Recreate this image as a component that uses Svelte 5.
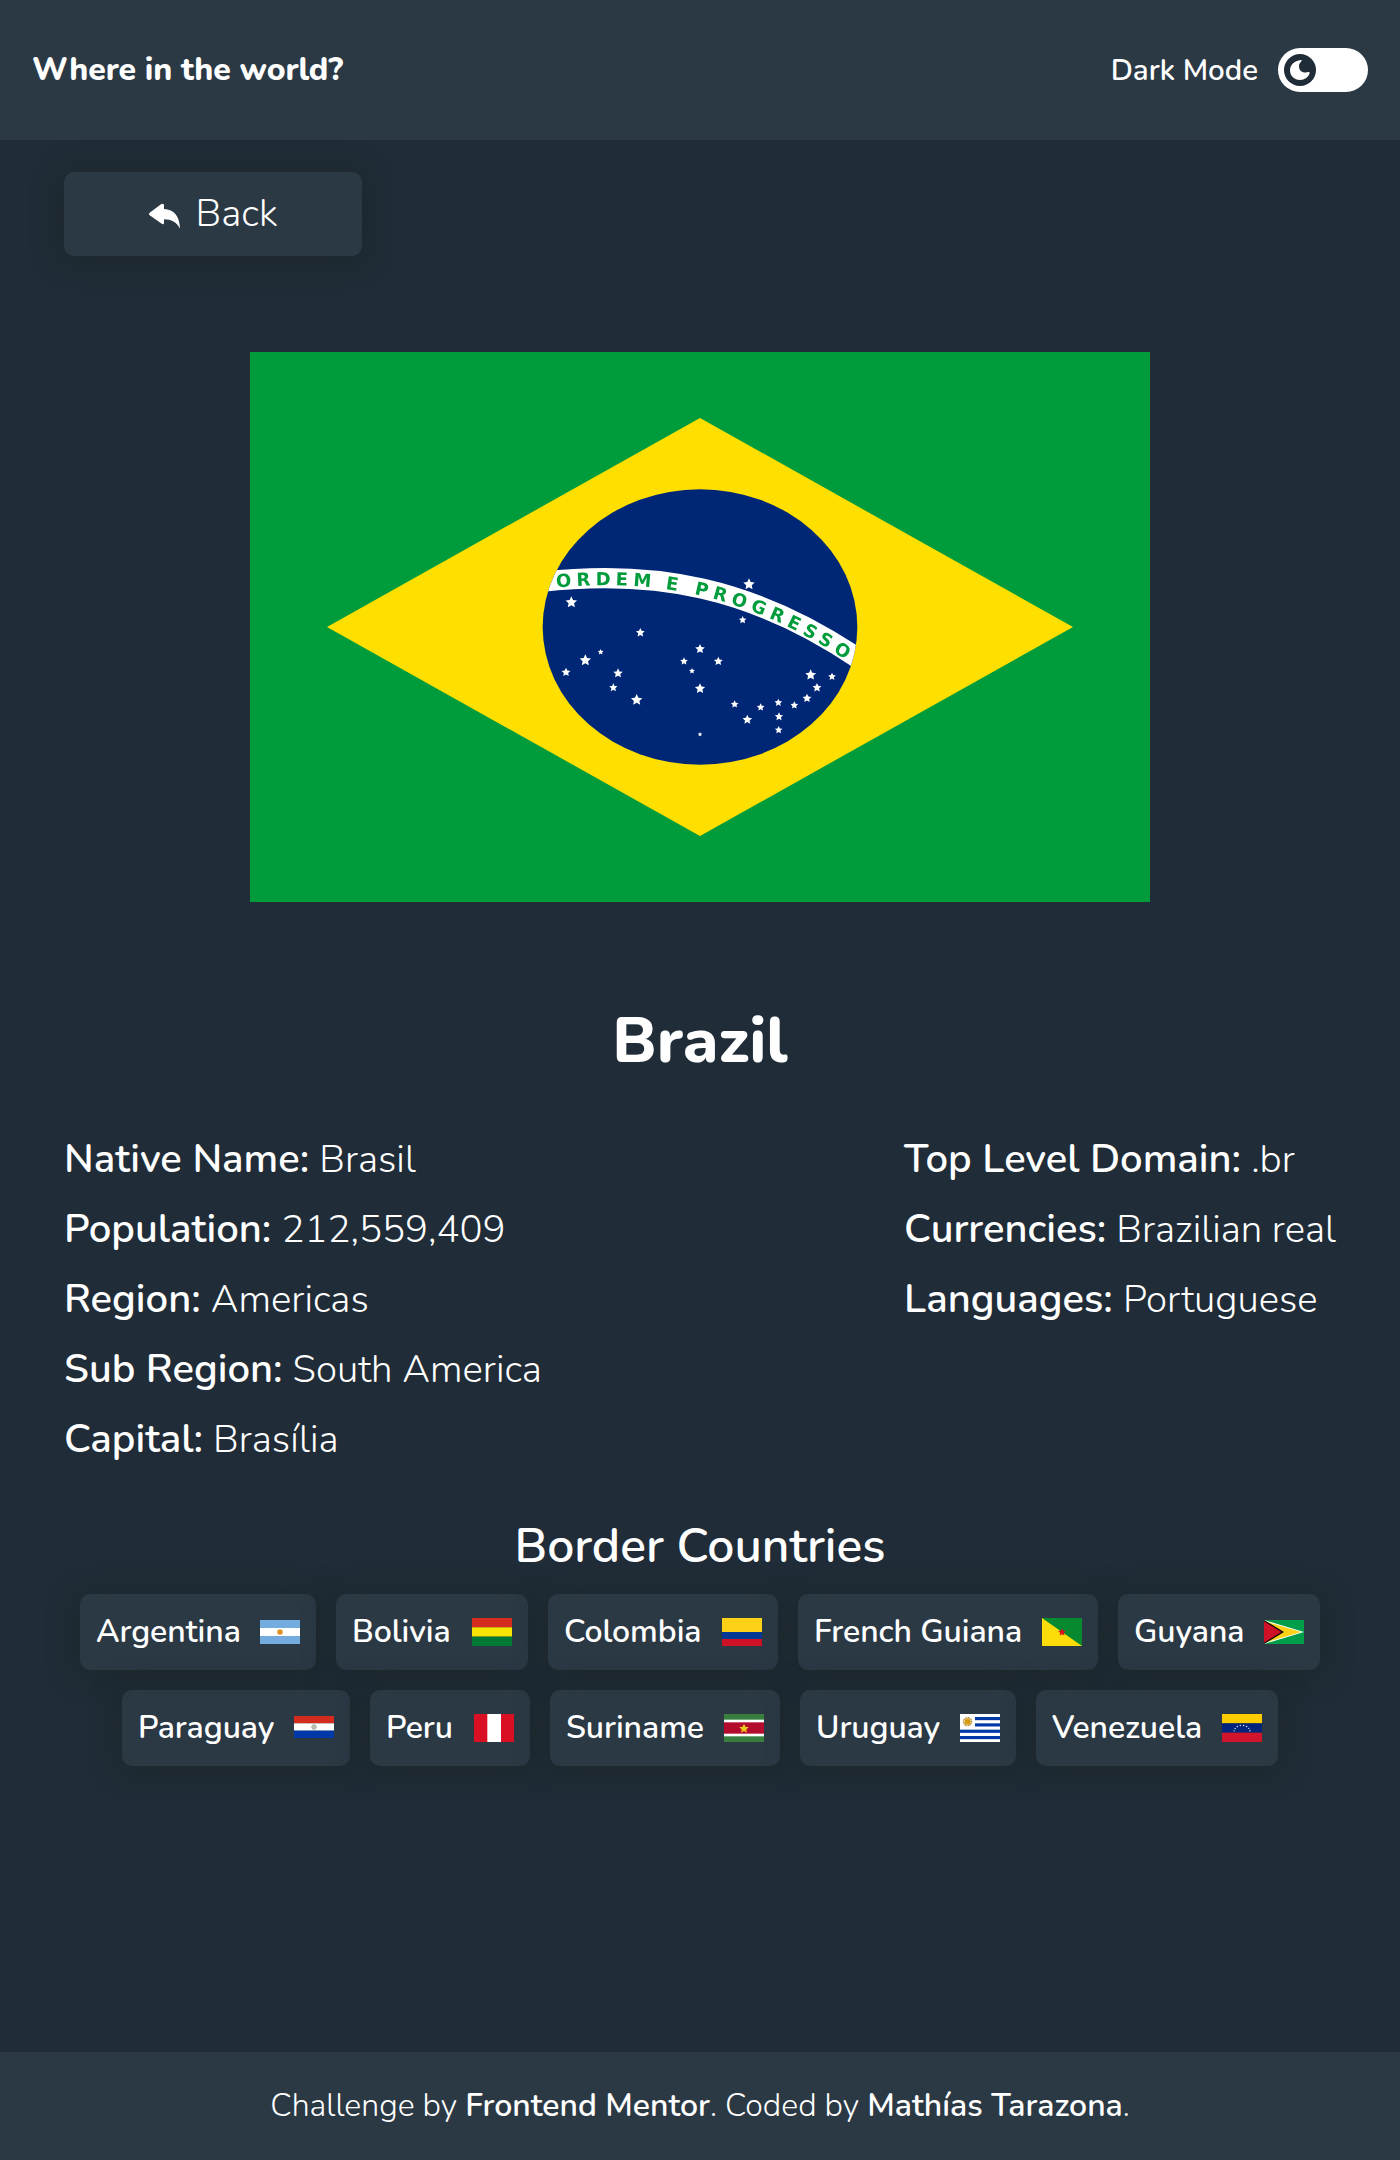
<script>
  const primary = [
    ['Native Name', 'Brasil'],
    ['Population', '212,559,409'],
    ['Region', 'Americas'],
    ['Sub Region', 'South America'],
    ['Capital', 'Brasília']
  ];
  const secondary = [
    ['Top Level Domain', '.br'],
    ['Currencies', 'Brazilian real'],
    ['Languages', 'Portuguese']
  ];
  // label width keeps every chip on whole pixels
  const borders = [
    { name: 'Argentina', width: 144, height: 24 },
    { name: 'Bolivia', width: 100, height: 28 },
    { name: 'Colombia', width: 138, height: 28 },
    { name: 'French Guiana', width: 208, height: 28 },
    { name: 'Guyana', width: 110, height: 24 },
    { name: 'Paraguay', width: 136, height: 24 },
    { name: 'Peru', width: 68, height: 28 },
    { name: 'Suriname', width: 138, height: 28 },
    { name: 'Uruguay', width: 124, height: 28 },
    { name: 'Venezuela', width: 150, height: 28 }
  ];
  // [x, y, radius] of each star inside the celestial globe
  const stars = [
    [154, 397, 18], [361, 488, 14], [242, 546, 9], [196, 571, 18], [138, 607, 14], [294, 610, 15],
    [280, 653, 13], [350, 690, 18], [540, 537, 15], [492, 574, 12], [595, 574, 14], [516, 603, 9],
    [540, 656, 16], [644, 703, 12], [682, 749, 15], [722, 712, 12], [775, 698, 12], [777, 740, 13],
    [776, 780, 12], [823, 706, 12], [861, 685, 14], [891, 653, 14], [872, 615, 17], [936, 620, 12],
    [687, 343, 18], [668, 450, 12], [540, 793, 7]
  ];
  const arc = [0, 1, 2, 3, 4, 5, 6, 7].map((i) => {
    const a = Math.PI * (1.04 + i * 0.131);
    return [60 + 24 * Math.cos(a), 53 + 19 * Math.sin(a)];
  });

  function starPoints(cx, cy, r) {
    let out = '';
    for (let i = 0; i < 10; i++) {
      const k = i % 2 ? r * 0.48 : r;
      const a = (Math.PI / 5) * i - Math.PI / 2;
      out += `${(cx + k * Math.cos(a)).toFixed(1)},${(cy + k * Math.sin(a)).toFixed(1)} `;
    }
    return out;
  }
</script>

<div class="page">
  <header>
    <h1>Where in the world?</h1>
    <div class="theme">
      <span>Dark Mode</span>
      <button class="toggle" aria-label="Toggle theme">
        <svg viewBox="30 30 96 96" width="32" height="32">
          <circle cx="78" cy="78" r="48" fill="#202c37" />
          <path fill="#fff" d="M81 48C60 50 48 64 48 79C48 96 61 108 78 108C92 108 104 99 107 87Q107 83 103 84C96 87 75 88 75 66Q75 59 82 52Q85 47 81 48Z" />
        </svg>
      </button>
    </div>
  </header>

  <main>
    <button class="back">
      <svg viewBox="27 12 96 96" width="32" height="32">
        <path fill="#fff" d="M31 57L66 31Q75 26 75 34V45C105 46 122 66 123 104C112 84 98 76 75 76V86Q75 94 66 88L31 63Q29 60 31 57Z" />
      </svg>
      <span>Back</span>
    </button>

    <svg class="flag" viewBox="0 0 900 550" width="900" height="550">
      <rect width="900" height="550" fill="#009c3b" />
      <g class="emblem">
        <path d="M450 66L823 275L450 484L77 275Z" fill="#ffdf00" />
        <g transform="translate(270 118) scale(.33333)">
          <clipPath id="globe"><ellipse cx="540" cy="471" rx="472" ry="413" /></clipPath>
          <ellipse cx="540" cy="471" rx="472" ry="413" fill="#002776" />
          <path d="M60 336C400 296 700 351 1020 569" fill="none" stroke="#fff" stroke-width="61" clip-path="url(#globe)" />
          <path id="motto" d="M60 358C398 317 690 372 1005 588" fill="none" />
          <g class="motto">
            <text><textPath href="#motto" startOffset="50" textLength="283">ORDEM</textPath></text>
            <text><textPath href="#motto" startOffset="377" textLength="37">E</textPath></text>
            <text><textPath href="#motto" startOffset="464" textLength="499">PROGRESSO</textPath></text>
          </g>
          {#each stars as [x, y, r]}
            <polygon points={starPoints(x, y, r)} fill="#fff" />
          {/each}
        </g>
      </g>
    </svg>

    <h2>Brazil</h2>

    <div class="details">
      {#each [primary, secondary] as list}
        <ul>
          {#each list as [label, value]}
            <li><b>{label}:</b> <span>{value}</span></li>
          {/each}
        </ul>
      {/each}
    </div>

    <h3>Border Countries</h3>
    <div class="borders">
      {#each borders as b}
        <a class="chip" href="#{b.name}">
          <span style="width: {b.width}px">{b.name}</span>
          <svg viewBox="0 0 120 {b.height * 3}" width="40" height={b.height}>
            {#if b.name === 'Argentina'}
              <rect width="120" height="72" fill="#74acdf" />
              <rect y="24" width="120" height="24" fill="#fff" />
              <circle cx="60" cy="36" r="8.5" fill="#e0a030" />
              <circle cx="60" cy="36" r="5" fill="#d98c1a" />
            {:else if b.name === 'Bolivia'}
              <rect width="120" height="28" fill="#d52b1e" />
              <rect y="28" width="120" height="28" fill="#f9e300" />
              <rect y="56" width="120" height="28" fill="#007934" />
            {:else if b.name === 'Colombia'}
              <rect width="120" height="42" fill="#fcd116" />
              <rect y="42" width="120" height="21" fill="#003893" />
              <rect y="63" width="120" height="21" fill="#ce1126" />
            {:else if b.name === 'French Guiana'}
              <rect width="120" height="84" fill="#078930" />
              <path d="M0 0L120 84H0Z" fill="#fcdd09" />
              <polygon points={starPoints(60, 43, 12)} fill="#da121a" />
            {:else if b.name === 'Guyana'}
              <rect width="120" height="72" fill="#009e49" />
              <path d="M0 0L120 36L0 72Z" fill="#fff" />
              <path d="M0 3L111 36L0 69Z" fill="#fcd116" />
              <path d="M0 0L60 36L0 72Z" fill="#000" />
              <path d="M0 4L53 36L0 68Z" fill="#ce1126" />
            {:else if b.name === 'Paraguay'}
              <rect width="120" height="22" fill="#d52b1e" />
              <rect y="22" width="120" height="22" fill="#fff" />
              <rect y="44" width="120" height="22" fill="#0038a8" />
              <circle cx="60" cy="33" r="6.5" fill="#e6e8e2" stroke="#8f9b88" stroke-width="3" />
              <circle cx="60" cy="33" r="2.5" fill="#7d9a5c" />
            {:else if b.name === 'Peru'}
              <rect width="120" height="84" fill="#d91023" />
              <rect x="40" width="41" height="84" fill="#fff" />
            {:else if b.name === 'Suriname'}
              <rect width="120" height="84" fill="#377e3f" />
              <rect y="17" width="120" height="50" fill="#fff" />
              <rect y="25" width="120" height="34" fill="#b40a2d" />
              <polygon points={starPoints(60, 44, 15)} fill="#ecc81d" />
            {:else if b.name === 'Uruguay'}
              <rect width="120" height="84" fill="#fff" />
              {#each [9, 28, 47, 66] as y, i}
                <rect x={i < 2 ? 45 : 0} {y} width="120" height="9.5" fill="#0038a8" />
              {/each}
              <circle cx="22.5" cy="23" r="11.5" fill="none" stroke="#b58224" stroke-width="5" stroke-dasharray="3 1.5" />
              <circle cx="22.5" cy="23" r="8.5" fill="#e3a90f" />
              <circle cx="22.5" cy="23" r="5" fill="none" stroke="#9c6a10" stroke-width="1.5" />
            {:else}
              <rect width="120" height="28" fill="#fc0" />
              <rect y="28" width="120" height="28" fill="#00247d" />
              <rect y="56" width="120" height="28" fill="#cf142b" />
              {#each arc as [x, y]}<circle cx={x} cy={y} r="2.1" fill="#e4e8f3" />{/each}
            {/if}
          </svg>
        </a>
      {/each}
    </div>
  </main>

  <footer>
    <p>Challenge by <b>Frontend Mentor</b>. Coded by <b>Mathías Tarazona</b>.</p>
  </footer>
</div>

<style>
  :global(body) {
    background: #202c37;
  }
  .page {
    display: flex;
    flex-direction: column;
    min-height: 2160px;
    background: #202c37;
    color: #fff;
    font-family: Nunito, Lato, sans-serif;
    font-size: 32px;
    font-weight: 300;
  }
  h1, h2, h3, p, ul {
    margin: 0;
    padding: 0;
  }
  svg {
    display: block;
    flex: none;
  }
  b {
    font-weight: 600;
  }
  header {
    display: flex;
    justify-content: space-between;
    align-items: center;
    box-sizing: border-box;
    height: 140px;
    padding: 0 32px;
    background: #2b3945;
  }
  h1 {
    padding-bottom: 2px;
    font-size: 32px;
    font-weight: 800;
    letter-spacing: -0.1px;
  }
  .theme {
    display: flex;
    align-items: center;
    gap: 20px;
    font-size: 29.5px;
    font-weight: 600;
  }
  .toggle {
    width: 90px;
    height: 44px;
    padding: 6px;
    border: 0;
    border-radius: 22px;
    background: #fff;
  }
  main {
    flex: 1;
    display: flex;
    flex-direction: column;
    align-items: center;
    padding: 32px 64px 0;
  }
  .back {
    align-self: flex-start;
    display: flex;
    justify-content: center;
    align-items: center;
    gap: 15px;
    width: 298px;
    height: 84px;
    padding: 0;
    border: 0;
    border-radius: 10px;
    background: #2b3945;
    box-shadow: 0 3px 30px #1c262a;
    color: inherit;
    font: inherit;
    font-size: 38.4px;
  }
  .back span {
    padding-bottom: 2px;
  }
  .flag {
    margin: 96px 0 95px;
  }
  .emblem {
    filter: blur(0.6px);
  }
  .motto {
    fill: #009c3b;
    font: bold 54px 'DejaVu Sans', sans-serif;
  }
  h2 {
    height: 87px;
    margin-bottom: 40px;
    font-size: 64px;
    font-weight: 800;
  }
  .details {
    align-self: stretch;
    display: flex;
    justify-content: space-between;
    margin-bottom: 39px;
  }
  ul {
    list-style: none;
  }
  li {
    height: 70px;
    font-size: 40px;
    line-height: 70px;
    white-space: nowrap;
  }
  li span {
    font-size: 38.4px;
  }
  h3 {
    height: 65px;
    margin-bottom: 16px;
    font-size: 48px;
    font-weight: 600;
  }
  .borders {
    display: flex;
    flex-wrap: wrap;
    justify-content: center;
    gap: 20px;
  }
  .chip {
    display: flex;
    align-items: center;
    gap: 20px;
    height: 76px;
    padding: 0 16px;
    border-radius: 10px;
    background: #2b3945;
    box-shadow: 0 3px 30px #1c262a;
    color: inherit;
    font-weight: 600;
    letter-spacing: -0.05px;
    text-decoration: none;
  }
  .chip span {
    padding-bottom: 2px;
    white-space: nowrap;
  }
  footer {
    display: flex;
    justify-content: center;
    align-items: center;
    height: 108px;
    background: #2b3945;
  }
  footer p {
    padding-bottom: 2px;
  }
</style>
